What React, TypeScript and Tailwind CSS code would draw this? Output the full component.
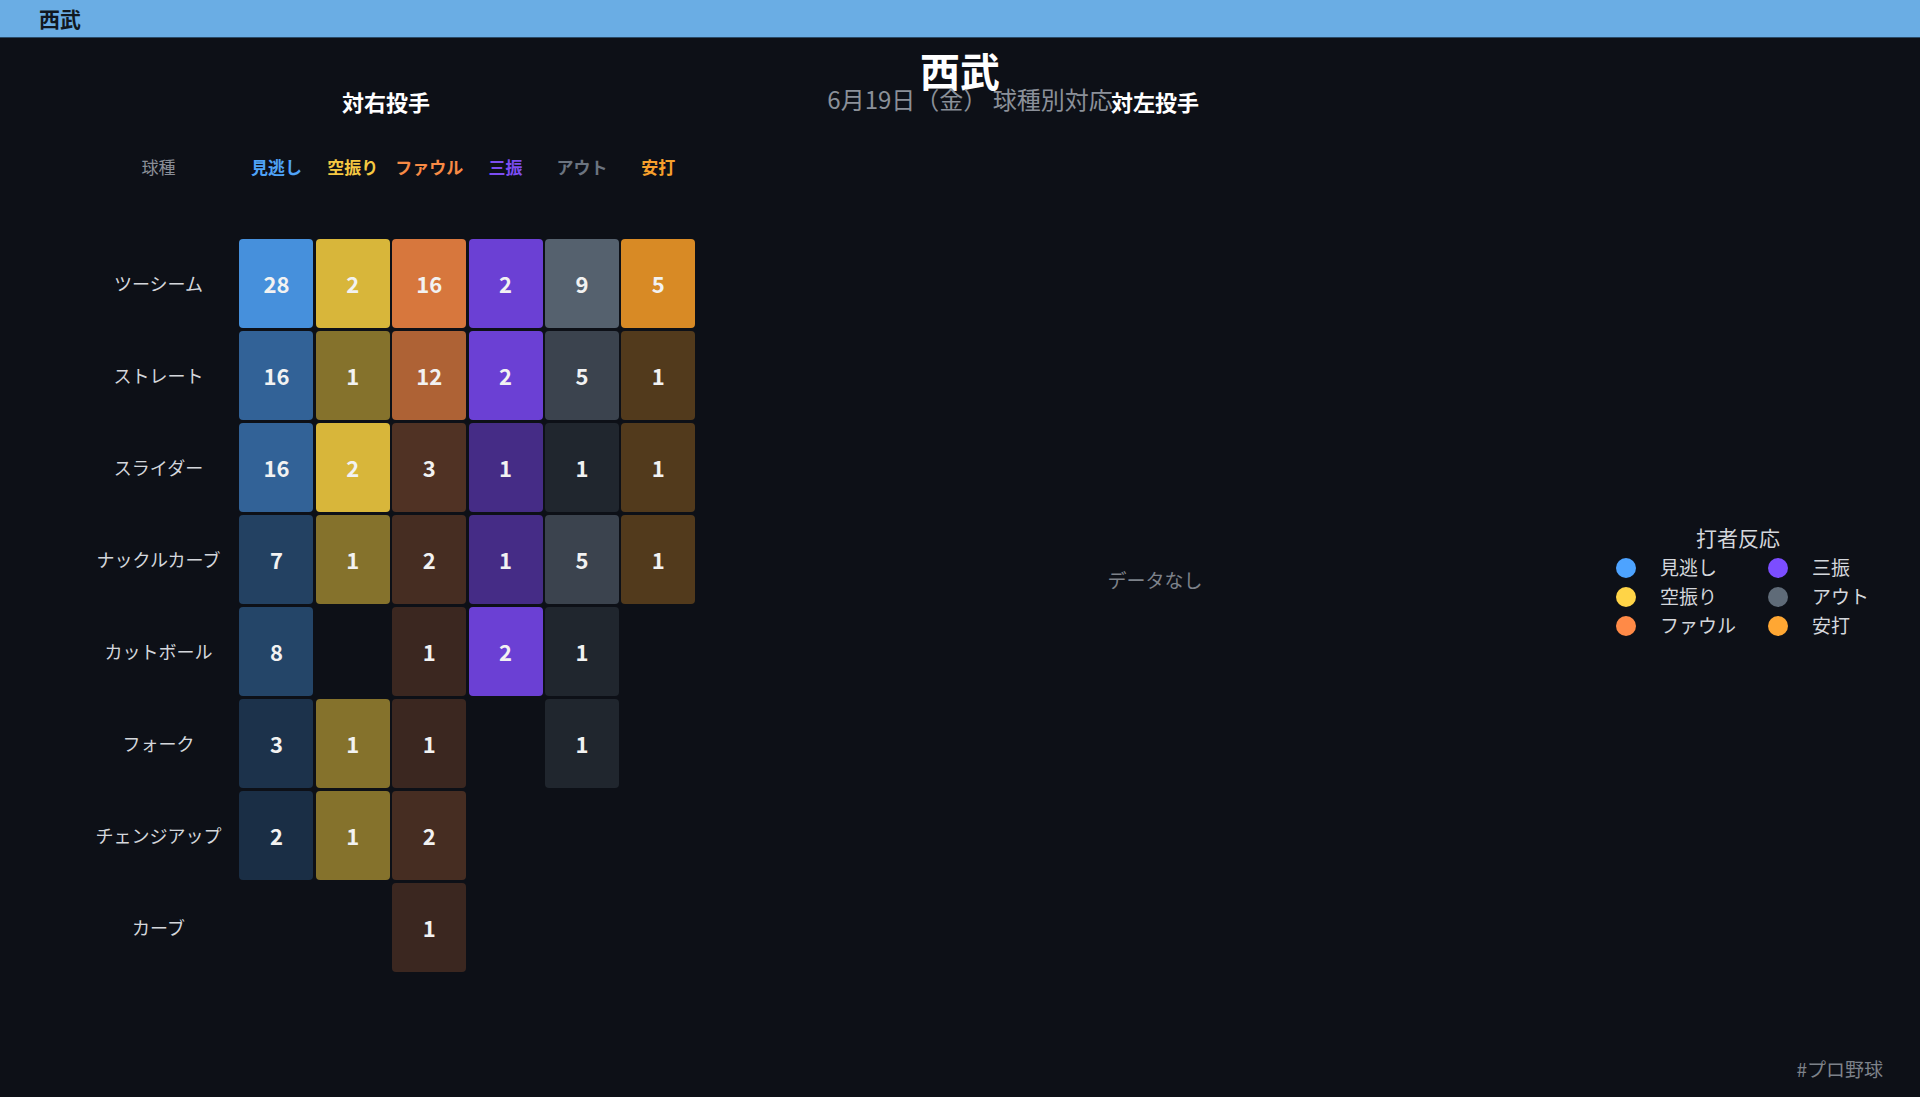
import React from "react";

const cols = [
  { name: "見逃し", color: [80, 166, 255], text: "text-[#4fa3f7]" },
  { name: "空振り", color: [252, 211, 64], text: "text-[#f5c842]" },
  { name: "ファウル", color: [251, 137, 68], text: "text-[#f88a45]" },
  { name: "三振", color: [124, 72, 245], text: "text-[#7c4df2]" },
  { name: "アウト", color: [98, 111, 125], text: "text-[#6b7480]" },
  { name: "安打", color: [252, 160, 40], text: "text-[#f6a02c]" },
];

const rows: [string, (number | null)[]][] = [
  ["ツーシーム", [28, 2, 16, 2, 9, 5]],
  ["ストレート", [16, 1, 12, 2, 5, 1]],
  ["スライダー", [16, 2, 3, 1, 1, 1]],
  ["ナックルカーブ", [7, 1, 2, 1, 5, 1]],
  ["カットボール", [8, null, 1, 2, 1, null]],
  ["フォーク", [3, 1, 1, null, 1, null]],
  ["チェンジアップ", [2, 1, 2, null, null, null]],
  ["カーブ", [null, null, 1, null, null, null]],
];

const maxes = cols.map((_, i) => Math.max(...rows.map((r) => r[1][i] ?? 0)));
const bg = [13, 16, 23];

function cellColor(v: number, i: number) {
  const a = 0.15 + 0.7 * (v / maxes[i]);
  const c = cols[i].color;
  const m = c.map((x, k) => Math.round(bg[k] + (x - bg[k]) * a));
  return `rgb(${m[0]},${m[1]},${m[2]})`;
}

const legend = [
  ["見逃し", "#4da3ff"], ["三振", "#7c4dff"],
  ["空振り", "#ffd447"], ["アウト", "#5f6b78"],
  ["ファウル", "#ff8a47"], ["安打", "#ffa733"],
];

export default function App() {
  return (
    <div className="w-[1920px] h-[1097px] bg-[#0d1017] overflow-hidden relative" style={{ fontFamily: '"Noto Sans CJK JP", "Noto Sans", sans-serif' }}>
      <div className="h-[38px] bg-[#6aade4] border-b border-[#2a4a66] flex items-center pl-[39px]">
        <span className="text-[21px] font-bold text-[#111820]">西武</span>
      </div>
      <div className="absolute left-0 right-0 top-[44px] flex flex-col items-center pointer-events-none">
        <div className="text-[40px] font-bold text-white leading-[52px]">西武</div>
        <div className="text-[24px] text-[#8b9099] leading-[30px] -mt-[12px] pl-[-0px] ml-[20px]">6月19日（金） 球種別対応</div>
      </div>
      <div className="flex">
        <div className="w-[772px] flex flex-col">
          <div className="h-[92px] flex items-end justify-center pb-[12px]">
            <span className="text-[22px] font-bold text-white">対右投手</span>
          </div>
          <div className="pl-[80px]">
            <div className="flex gap-[2.4px] items-center h-[46px] mt-[14px]">
              <div className="w-[157px] text-center text-[17px] text-[#8a8f98]">球種</div>
              {cols.map((c) => (
                <div key={c.name} className={`w-[74px] text-center text-[17px] font-bold ${c.text}`}>{c.name}</div>
              ))}
            </div>
            <div className="mt-[49px] flex flex-col gap-[3px]">
              {rows.map(([label, vals]) => (
                <div key={label} className="flex gap-[2.4px] items-center h-[89px]">
                  <div className="w-[157px] text-center text-[18px] text-[#d4d7dc]">{label}</div>
                  {vals.map((v, i) => (
                    <div key={i} className="w-[74px] h-[89px] rounded-[4px] flex items-center justify-center text-[22px] font-bold text-[#f2f2f2]" style={v != null ? { backgroundColor: cellColor(v, i) } : undefined}>
                      {v ?? ""}
                    </div>
                  ))}
                </div>
              ))}
            </div>
          </div>
        </div>
        <div className="w-[766px] flex flex-col items-center">
          <div className="h-[92px] flex items-end pb-[12px]">
            <span className="text-[22px] font-bold text-white">対左投手</span>
          </div>
          <div className="mt-[436px] text-[19px] text-[#7d828a]">データなし</div>
        </div>
        <div className="flex-1 pt-[484px] pl-[78px]">
          <div className="w-[236px] text-center text-[21px] text-[#d4d7dc] pl-[8px]">打者反応</div>
          <div className="grid grid-cols-[152px_120px] gap-y-[5px] mt-[2px]">
            {legend.map(([n, c]) => (
              <div key={n} className="flex items-center h-[24px]">
                <span className="w-[20px] h-[20px] rounded-full" style={{ backgroundColor: c }} />
                <span className="ml-[24px] text-[19px] text-[#d4d7dc]">{n}</span>
              </div>
            ))}
          </div>
        </div>
      </div>
      <div className="absolute right-[37px] bottom-[14px] text-[19px] text-[#7d828a]">#プロ野球</div>
    </div>
  );
}
